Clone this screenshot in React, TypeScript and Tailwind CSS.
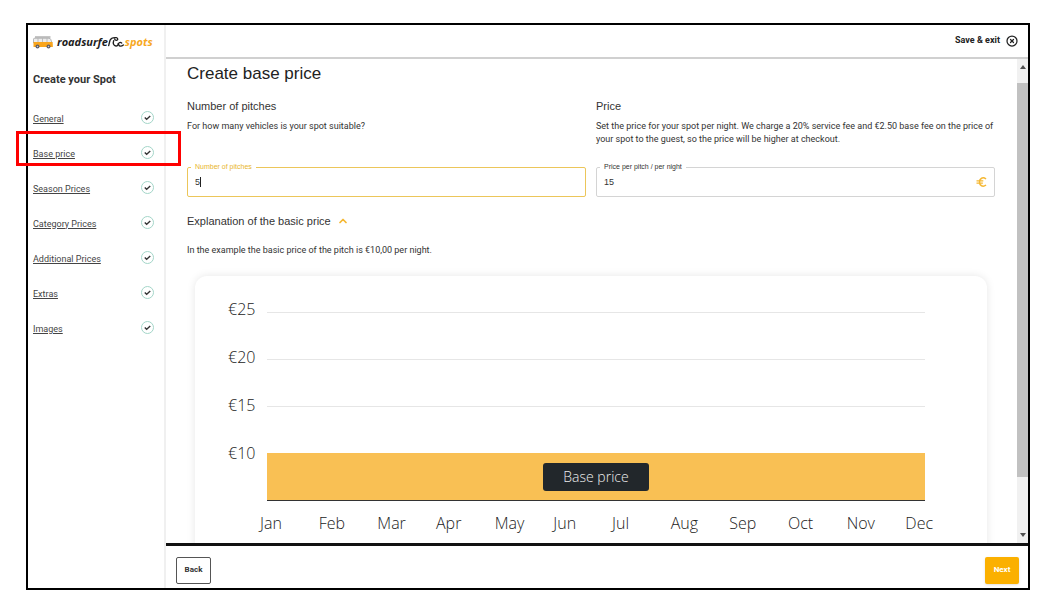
import { useState } from "react";
import { ChevronUp, CircleX } from "lucide-react";

const steps = [
  { name: "General", href: "#general" },
  { name: "Base price", href: "#base-price" },
  { name: "Season Prices", href: "#season-prices" },
  { name: "Category Prices", href: "#category-prices" },
  { name: "Additional Prices", href: "#additional-prices" },
  { name: "Extras", href: "#extras" },
  { name: "Images", href: "#images" },
];

const prices = ["€25", "€20", "€15", "€10"];

const months = ["Jan", "Feb", "Mar", "Apr", "May", "Jun", "Jul", "Aug", "Sep", "Oct", "Nov", "Dec"];

function Logo() {
  return (
    <a href="#home" className="flex items-center text-[11px] leading-4 font-bold italic font-['Open_Sans',sans-serif]">
      <svg viewBox="0 0 40 26" className="mr-1 h-[13px] w-5 shrink-0" fill="none">
        <path d="M4 2h31" stroke="#8a8a8a" strokeWidth="2" />
        <path d="M3 4.500h29c2 0 3 .8 3.600 2.500l2.600 7H1V7c0-1.600.6-2.500 2-2.500z" fill="#ececec" stroke="#8c8c8c" strokeWidth="1.200" />
        <path d="M10 5v8M19 5v8M28 5v8" stroke="#a0a0a0" strokeWidth="1.200" />
        <path d="M1 12h37.500c.8 0 1.200 3 1.200 10H1z" fill="#f9a51c" />
        <circle cx="9" cy="21" r="4" fill="#5b5b66" />
        <circle cx="31" cy="21" r="4" fill="#5b5b66" />
        <circle cx="9" cy="21" r="1.500" fill="#c9c9c9" />
        <circle cx="31" cy="21" r="1.500" fill="#c9c9c9" />
      </svg>
      <span className="text-[#1d1d1d]">roadsurfe</span>
      <svg viewBox="0 0 48 36" className="mr-px h-3 w-4 shrink-0" fill="none" stroke="#1d1d1d" strokeWidth="4" strokeLinecap="round">
        <path d="M2 29 6 13C9 6 16 4 25 5c5 1 6 7 1 8-4 0-6-2-6-4" />
        <path d="M17 14c-3 8 0 15 7 16 5 0 7-3 6-6" />
        <path d="M41 21c-5-4-11 0-9 5 2 6 9 5 14 1" />
      </svg>
      <span className="text-[#f7a823]">spots</span>
    </a>
  );
}

function StepCheck() {
  return (
    <svg viewBox="0 0 26 26" className="h-[13px] w-[13px] shrink-0" fill="none">
      <circle cx="13" cy="13" r="12" stroke="#a3d5c8" strokeWidth="2" />
      <path d="m7.500 13 3.800 3.500 7.200-6.500" stroke="#333" strokeWidth="2.800" />
    </svg>
  );
}

function EuroIcon() {
  return (
    <svg viewBox="0 0 24 22" className="h-[10px] w-[11px] shrink-0" fill="none" stroke="#f5b731" strokeWidth="3.200">
      <path d="M22 4.500C15 -1 7.500 3 7.500 11s7.500 12 14.500 6.500" />
      <path d="M1 8.500h15M1 13.500h14" strokeWidth="2.600" />
    </svg>
  );
}

function Sidebar() {
  return (
    <aside className="w-[138px] shrink-0 border-r-2 border-[#f0f0f0] pr-[10px] pl-[5px]">
      <div className="flex h-[34px] items-center">
        <Logo />
      </div>
      <h2 className="mt-3 font-['Roboto',sans-serif] text-[11px] leading-[18px] font-bold text-[#333]">
        Create your Spot
      </h2>
      <nav className="mt-[11px]">
        <ul>
          {steps.map((step) => (
            <li key={step.name} className="relative flex h-[35px] items-center justify-between">
              <a href={step.href} className="pt-0.5 font-['Roboto',sans-serif] text-[9px] leading-3 text-[#444] underline">
                {step.name}
              </a>
              <StepCheck />
              {step.name === "Base price" && (
                <span className="pointer-events-none absolute -top-1 -right-[27px] bottom-1 -left-[17px] z-10 border-[3px] border-[#fe0000]" />
              )}
            </li>
          ))}
        </ul>
      </nav>
    </aside>
  );
}

function Scrollbar() {
  return (
    <div className="flex w-[11px] shrink-0 flex-col items-center justify-between bg-[#f1f1f1] py-1.5">
      <span className="border-x-[3px] border-b-4 border-x-transparent border-b-[#505050]" />
      <span className="mt-[14px] mb-[56px] w-full flex-1 bg-[#c1c1c1]" />
      <span className="border-x-[3px] border-t-4 border-x-transparent border-t-[#505050]" />
    </div>
  );
}

function PriceChart() {
  return (
    <div className="mx-2 rounded-xl px-[33px] pt-[9px] pb-10 shadow-[0_0_8px_rgba(0,0,0,0.1)] font-['Open_Sans',sans-serif] font-light text-[#222]">
      <div className="flex">
        <div className="w-[39px] shrink-0 text-base">
          {prices.map((price) => (
            <div key={price} className="flex h-12 items-center">
              {price}
            </div>
          ))}
        </div>
        <div className="mr-[29px] flex-1 pt-[27px]">
          <div className="h-[47px] border-t border-[#e6e6e6]" />
          <div className="h-[47px] border-t border-[#e6e6e6]" />
          <div className="h-[47px] border-t border-[#e6e6e6]" />
          <div className="flex h-12 items-center justify-center border-b border-[#333] bg-[#f9c054]">
            <span className="rounded-[3px] bg-[#22272b] px-5 text-sm leading-7 text-[#eee]">Base price</span>
          </div>
        </div>
      </div>
      <div className="mt-[10px] -mr-[10px] ml-8 grid grid-cols-12 text-base">
        {months.map((month) => (
          <span key={month}>{month}</span>
        ))}
      </div>
    </div>
  );
}

export default function App() {
  const [pitches, setPitches] = useState("5");
  const [price, setPrice] = useState("15");

  return (
    <div className="flex h-screen bg-white pt-[23px] pr-3 pb-2 pl-[26px] font-['Liberation_Sans',Arial,sans-serif] text-[#333]">
      <div className="flex min-w-0 flex-1 border-2 border-black">
        <Sidebar />

        <div className="flex min-w-0 flex-1 flex-col">
          <header className="flex h-[34px] shrink-0 items-center justify-end border-b-2 border-[#d0d0d0] pr-[10px]">
            <button className="flex items-center gap-1.5 font-['Roboto',sans-serif] text-[9px] font-bold text-[#222]">
              Save &amp; exit
              <CircleX className="h-3 w-3" strokeWidth={2.5} />
            </button>
          </header>

          <div className="flex min-h-0 flex-1">
            <main className="min-w-0 flex-1 overflow-hidden pt-[3px] pr-[22px] pl-[21px]">
              <h1 className="text-[17px] leading-6 text-[#222]">Create base price</h1>

              <div className="mt-3 grid grid-cols-2 gap-x-[10px]">
                <section>
                  <h2 className="text-[11px] leading-4">Number of pitches</h2>
                  <p className="mt-1.5 font-['Roboto',sans-serif] text-[9px] leading-[13px]">
                    For how many vehicles is your spot suitable?
                  </p>
                </section>
                <section>
                  <h2 className="text-[11px] leading-4">Price</h2>
                  <p className="mt-1.5 font-['Roboto',sans-serif] text-[9px] leading-[13px]">
                    Set the price for your spot per night. We charge a 20% service fee and €2.50 base fee on the price of
                    your spot to the guest, so the price will be higher at checkout.
                  </p>
                </section>

                <fieldset className="relative mt-[17px] h-[34px] rounded-[2px] border border-[#ecc65a] px-[3px]">
                  <legend className="px-1 text-[7px] leading-2 text-[#e9b52c]">
                    <label htmlFor="pitches">Number of pitches</label>
                  </legend>
                  <input
                    id="pitches"
                    type="text"
                    value={pitches}
                    onChange={(e) => setPitches(e.target.value)}
                    className="block h-[22px] w-full px-1 text-[9px] outline-none"
                  />
                  <span className="pointer-events-none absolute top-1.5 left-3 h-[10px] w-px bg-[#222]" />
                </fieldset>
                <fieldset className="mt-[17px] h-[34px] rounded-[2px] border border-[#d4d4d4] px-[3px]">
                  <legend className="px-1 text-[7px] leading-2">
                    <label htmlFor="price">Price per pitch / per night</label>
                  </legend>
                  <div className="flex items-center pr-1">
                    <input
                      id="price"
                      type="text"
                      value={price}
                      onChange={(e) => setPrice(e.target.value)}
                      className="block h-[22px] min-w-0 flex-1 px-1 text-[9px] outline-none"
                    />
                    <EuroIcon />
                  </div>
                </fieldset>
              </div>

              <button className="mt-4 flex items-center gap-1.5 text-[11px] leading-4">
                Explanation of the basic price
                <ChevronUp className="h-3 w-3 text-[#f5b731]" strokeWidth={3.5} />
              </button>
              <p className="mt-[15px] mb-[19px] font-['Roboto',sans-serif] text-[9px] leading-[13px]">
                In the example the basic price of the pitch is €10,00 per night.
              </p>

              <PriceChart />
            </main>
            <Scrollbar />
          </div>

          <footer className="flex h-[45px] shrink-0 items-center justify-between border-t-[3px] border-[#111] pt-1.5 pr-[9px] pl-[10px] font-['Roboto',sans-serif]">
            <button className="h-[27px] w-[35px] rounded-[2px] border border-[#555] text-[8px] font-bold">Back</button>
            <button className="h-[27px] w-[34px] rounded-[2px] bg-[#fbb000] text-[8px] font-bold text-white shadow-sm">
              Next
            </button>
          </footer>
        </div>
      </div>
    </div>
  );
}
